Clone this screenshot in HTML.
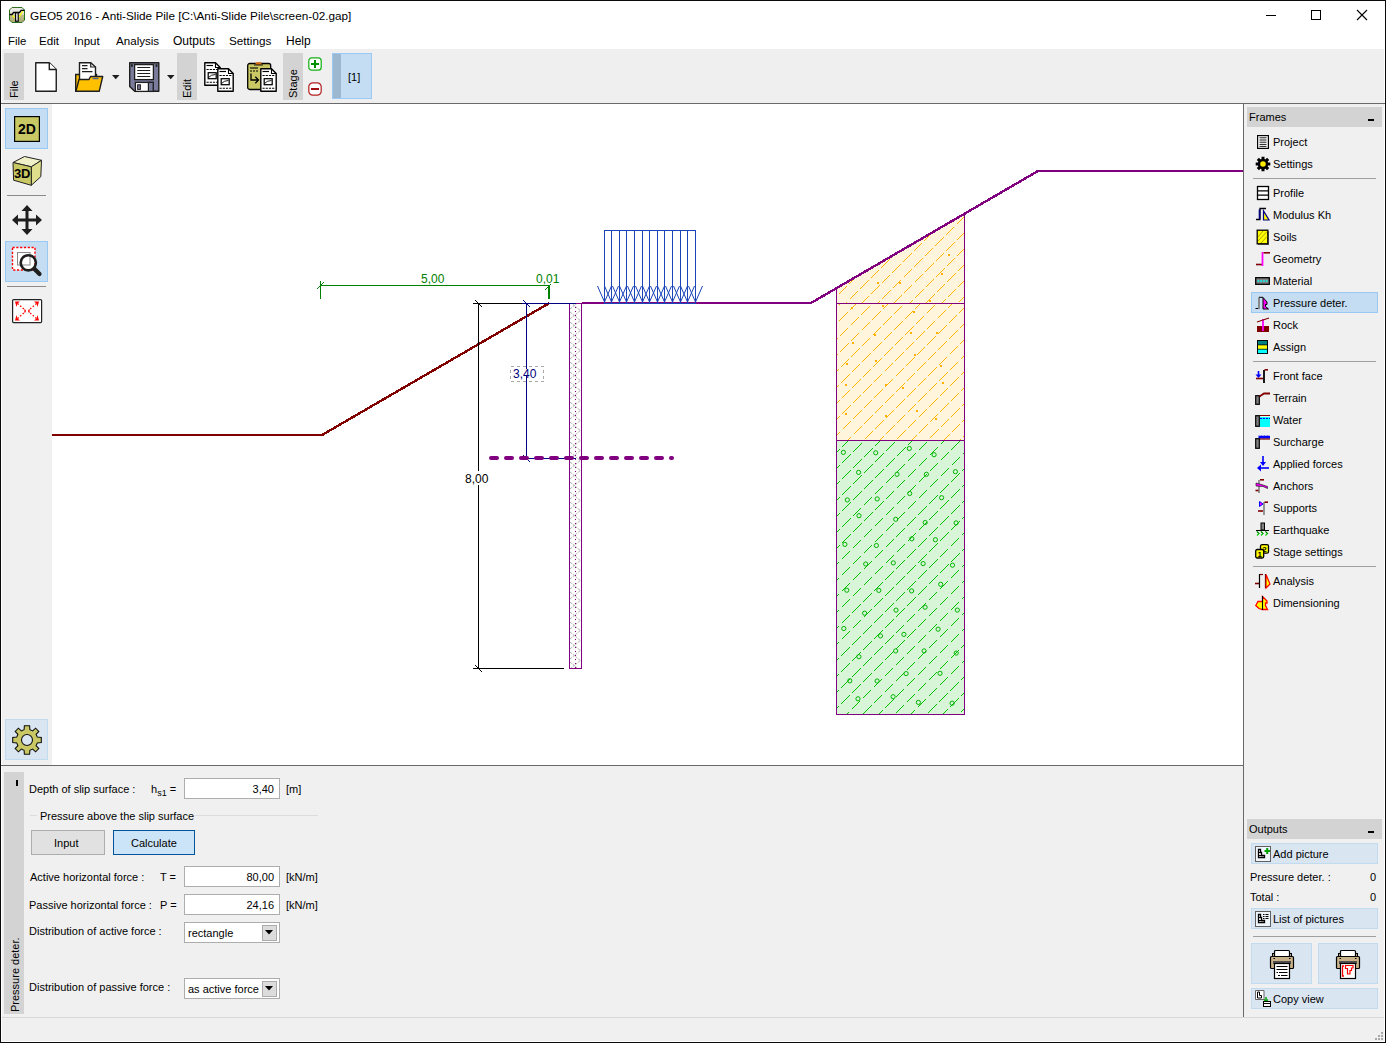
<!DOCTYPE html>
<html><head><meta charset="utf-8">
<style>
*{margin:0;padding:0;box-sizing:border-box}
html,body{width:1386px;height:1043px;overflow:hidden;background:#fff;font-family:"Liberation Sans",sans-serif;font-size:12px;color:#000}
.a{position:absolute}
svg.a{overflow:visible}
.t{position:absolute;white-space:nowrap;font-size:12px;line-height:14px}
.s{position:absolute;white-space:nowrap;font-size:11px;line-height:13px}
.tab{position:absolute;background:#d3d3d3}
.vt{position:absolute;white-space:nowrap;font-size:11px;line-height:13px;transform-origin:0 0;transform:rotate(-90deg)}
.hl{position:absolute;background:#c4ddf2;border:1px solid #98c9f5}
.hl2{position:absolute;background:#d9e5f1;border:1px solid #c1dbf1}
.sep{position:absolute;height:1px;background:#a0a0a0}
.inp{position:absolute;background:#fff;border:1px solid #adadad;height:21px;width:96px}
.inp span{position:absolute;right:5px;top:4px;font-size:11px;line-height:13px}
.ic{position:absolute}
</style></head>
<body>
<!-- window frame -->
<div class="a" style="left:0;top:0;width:1386px;height:1043px;border:1px solid #0a0a0a;background:#fff"></div>
<!-- title bar -->
<svg class="a" style="left:9px;top:7px" width="16" height="16" viewBox="0 0 16 16">
 <defs><linearGradient id="ig" x1="0" y1="0" x2="0" y2="1"><stop offset="0" stop-color="#ececec"/><stop offset="0.45" stop-color="#e0e0d0"/><stop offset="0.5" stop-color="#c0c088"/><stop offset="1" stop-color="#a8a870"/></linearGradient></defs>
 <path d="M3 0.5H13L15.5 3V13L13 15.5H3L0.5 13V3Z" fill="url(#ig)" stroke="#2f7020" stroke-width="1"/>
 <path d="M3.5 8.5L5.5 10.5M9.5 10.5L14 4" stroke="#ffff00" stroke-width="1.2" fill="none"/>
 <path d="M0.5 7.5H3L4.6 5.5H10.5L12.2 3.3H15.5" fill="none" stroke="#000" stroke-width="1.3"/>
 <rect x="6.6" y="5.8" width="2.6" height="8.4" fill="#fff" stroke="#000" stroke-width="1.2"/>
</svg>
<div class="t" style="left:30px;top:9px;font-size:11.75px">GEO5 2016 - Anti-Slide Pile [C:\Anti-Slide Pile\screen-02.gap]</div>
<!-- menu -->
<div class="t" style="left:8px;top:34px;font-size:11.4px">File</div>
<div class="t" style="left:39px;top:34px;font-size:11.6px">Edit</div>
<div class="t" style="left:74px;top:34px;font-size:11.6px">Input</div>
<div class="t" style="left:116px;top:34px;font-size:11.6px">Analysis</div>
<div class="t" style="left:173px;top:34px;font-size:12px">Outputs</div>
<div class="t" style="left:229px;top:34px;font-size:11.7px">Settings</div>
<div class="t" style="left:286px;top:34px;font-size:12px">Help</div>
<!-- window controls -->
<div class="a" style="left:1266px;top:15px;width:10px;height:1px;background:#000"></div>
<div class="a" style="left:1311px;top:10px;width:10px;height:10px;border:1px solid #000"></div>
<svg class="a" style="left:1356px;top:9px" width="12" height="12"><path d="M1 1L11 11M11 1L1 11" stroke="#000" stroke-width="1.1"/></svg>

<!-- toolbar -->
<div class="a" style="left:2px;top:49px;width:1382px;height:54px;background:#efefef"></div>
<div class="a" style="left:1px;top:103px;width:1384px;height:1px;background:#696969"></div>
<div class="tab" style="left:4px;top:53px;width:20px;height:47px"></div>
<div class="vt" style="left:8px;top:98px;color:#000;font-size:11px">File</div>
<div class="tab" style="left:177px;top:53px;width:20px;height:47px"></div>
<div class="vt" style="left:181px;top:98px;font-size:11px">Edit</div>
<div class="tab" style="left:283px;top:53px;width:20px;height:47px"></div>
<div class="vt" style="left:287px;top:98px;font-size:11px">Stage</div>
<!-- new -->
<svg class="a" style="left:35px;top:62px" width="22" height="30" viewBox="0 0 22 30"><path d="M0.75 0.75H14.3L21.25 7.5V29.25H0.75Z" fill="#fff" stroke="#1e1e1e" stroke-width="1.4" stroke-linejoin="round"/><path d="M14.3 0.75V7.5H21.25" fill="#fff" stroke="#1e1e1e" stroke-width="1.4"/></svg>
<!-- open -->
<svg class="a" style="left:75px;top:62px" width="29" height="30" viewBox="0 0 29 30">
 <path d="M0.7 12.5H21.5V29.3H0.7Z" fill="#ffc000" stroke="#1e1e1e" stroke-width="1.4"/>
 <path d="M4.5 0.7H15.7L20.5 5V22H4.5Z" fill="#fff" stroke="#1e1e1e" stroke-width="1.4"/>
 <path d="M15.7 0.7V5H20.5" fill="none" stroke="#1e1e1e" stroke-width="1.2"/>
 <path d="M7 3.6H12.5M7 6.6H12.5M7 9.6H17.5" stroke="#1e1e1e" stroke-width="1.2"/>
 <path d="M0.9 29.3L4 17.5H14L15.5 14.5H27.7L24.2 29.3Z" fill="#ffc000" stroke="#1e1e1e" stroke-width="1.4" stroke-linejoin="round"/>
 <path d="M17.5 16.5H23.5" stroke="#5a6890" stroke-width="1.5"/>
</svg>
<svg class="a" style="left:112px;top:75px" width="8" height="5"><path d="M0 0H7.5L3.75 4.2Z" fill="#1e1e1e"/></svg>
<!-- save -->
<svg class="a" style="left:129px;top:62px" width="31" height="30" viewBox="0 0 31 30">
 <path d="M0.7 0.7H29.8V29.3H5.7L0.7 24.5Z" fill="#7b7b9b" stroke="#1e1e1e" stroke-width="1.4" stroke-linejoin="round"/>
 <rect x="5.6" y="2.6" width="18.8" height="15" fill="#fff" stroke="#1e1e1e" stroke-width="1.3"/>
 <path d="M8.3 5.5H21.2M8.3 8.5H21.2M8.3 11.5H21.2M8.3 14.5H21.2" stroke="#1e1e1e" stroke-width="1.1"/>
 <rect x="6.4" y="20.4" width="17.8" height="9" fill="#fff" stroke="#1e1e1e" stroke-width="1.3"/>
 <rect x="19.4" y="20.4" width="4.8" height="9" fill="#7b7b9b" stroke="#1e1e1e" stroke-width="1.2"/>
 <rect x="8.6" y="22.8" width="2.8" height="4.6" fill="#7b7b9b" stroke="#1e1e1e" stroke-width="1"/>
 <rect x="2" y="2.2" width="1.8" height="2.6" fill="#1e1e1e"/><rect x="26.6" y="2.2" width="1.8" height="2.6" fill="#1e1e1e"/>
</svg>
<svg class="a" style="left:167px;top:75px" width="8" height="5"><path d="M0 0H7.5L3.75 4.2Z" fill="#1e1e1e"/></svg>
<!-- copy -->
<svg class="a" style="left:204px;top:62px" width="31" height="31" viewBox="0 0 31 31">
 <g id="doc"><path d="M0.8 0.8H11.5L16.2 5.5V23.2H0.8Z" fill="#fff" stroke="#000" stroke-width="1.4" stroke-linejoin="round"/><path d="M11.5 0.8V5.5H16.2" fill="none" stroke="#000" stroke-width="1.1"/>
 <path d="M2.5 3.5H9" stroke="#000" stroke-width="1.15"/><path d="M2.5 7.5H14.5M2.5 20.2H14.5" stroke="#000" stroke-width="1.15" stroke-dasharray="2.2 1"/>
 <rect x="4.2" y="10.7" width="8" height="6" fill="#fff" stroke="#000" stroke-width="1.25"/><path d="M4.5 15.5Q7 12.5 11.5 12.5" fill="none" stroke="#000" stroke-width="0.9"/></g>
 <use href="#doc" x="13" y="6"/>
</svg>
<!-- paste -->
<svg class="a" style="left:247px;top:62px" width="31" height="31" viewBox="0 0 31 31">
 <rect x="0.7" y="1.5" width="23" height="26" rx="2" fill="#c9c864" stroke="#000" stroke-width="1.3"/>
 <rect x="8.5" y="0.3" width="6" height="2.6" rx="1.3" fill="#d87010"/><path d="M7 3H16" stroke="#000" stroke-width="0.9"/>
 <path d="M3 6H11" stroke="#000" stroke-width="1.1"/><path d="M3 9H11" stroke="#000" stroke-width="1.1" stroke-dasharray="2 1"/>
 <path d="M4 11.5V18H11.5M8.3 14.8L11.5 18L8.3 21.2" fill="none" stroke="#000" stroke-width="1.3"/>
 <use href="#doc" x="13" y="6"/>
</svg>
<!-- stage +/- -->
<svg class="a" style="left:308px;top:57px" width="14" height="14" viewBox="0 0 14 14"><rect x="0.8" y="0.8" width="12.4" height="12.4" rx="3" fill="#fff" stroke="#10b010" stroke-width="1.2"/><path d="M3 7H11M7 3V11" stroke="#009000" stroke-width="2"/></svg>
<svg class="a" style="left:308px;top:82px" width="14" height="14" viewBox="0 0 14 14"><rect x="0.8" y="0.8" width="12.4" height="12.4" rx="4" fill="#fff" stroke="#b02020" stroke-width="1.2"/><path d="M3 7H11" stroke="#a01010" stroke-width="2"/></svg>
<div class="a" style="left:332px;top:53px;width:40px;height:46px;background:#c4ddf2;border:1px solid #99c9f4"></div>
<div class="a" style="left:333px;top:54px;width:8px;height:44px;background:#9cb8d0"></div>
<div class="t" style="left:348px;top:70px;font-size:11px">[1]</div>

<!-- left toolbar -->
<div class="a" style="left:2px;top:104px;width:50px;height:661px;background:#f0f0f0"></div>
<div class="hl" style="left:5px;top:108px;width:43px;height:41px"></div>
<svg class="a" style="left:14px;top:116px" width="26" height="26" viewBox="0 0 26 26"><rect x="0.6" y="0.6" width="24.8" height="24.8" fill="#c8c864" stroke="#000" stroke-width="1.2"/><text x="13" y="18.2" text-anchor="middle" font-family="Liberation Sans" font-weight="bold" font-size="14" fill="#000">2D</text></svg>
<svg class="a" style="left:12px;top:156px" width="31" height="31" viewBox="0 0 31 31">
 <path d="M1 6.5L12.5 0.5L29.5 4.3L19.3 10.8Z" fill="#efefc8" stroke="#222" stroke-width="1"/>
 <path d="M19.3 10.8L29.5 4.3L28.8 20.7L19.3 29.3Z" fill="#dede8c" stroke="#222" stroke-width="1"/>
 <path d="M1 6.5L19.3 10.8L19.3 29.3L1.6 24.2Z" fill="#c8c864" stroke="#222" stroke-width="1"/>
 <text x="10.2" y="22" text-anchor="middle" font-family="Liberation Sans" font-weight="bold" font-size="13" fill="#000">3D</text>
</svg>
<div class="a" style="left:7px;top:195px;width:39px;height:1px;background:#8a8a8a"></div>
<svg class="a" style="left:12px;top:205px" width="31" height="31" viewBox="0 0 31 31">
 <path d="M15 4V26M4 15H26" stroke="#1e1e1e" stroke-width="3"/>
 <path d="M15 0L20.5 6H9.5Z M15 30L20.5 24H9.5Z M0 15L6 9.5V20.5Z M30 15L24 9.5V20.5Z" fill="#1e1e1e"/>
</svg>
<div class="hl" style="left:5px;top:241px;width:43px;height:41px"></div>
<svg class="a" style="left:11px;top:246px" width="32" height="32" viewBox="0 0 32 32">
 <rect x="1.5" y="1.5" width="22.5" height="22.5" fill="#fff" stroke="#ff0000" stroke-width="1.4" stroke-dasharray="2.2 1.6"/>
 <rect x="6.5" y="6.5" width="12.5" height="12.5" fill="none" stroke="#888" stroke-width="1"/>
 <circle cx="17.3" cy="16.8" r="7.6" fill="none" stroke="#1e1e1e" stroke-width="2.6"/>
 <path d="M23.5 23L28.5 28" stroke="#1e1e1e" stroke-width="4.2" stroke-linecap="round"/>
</svg>
<div class="a" style="left:7px;top:286px;width:39px;height:1px;background:#8a8a8a"></div>
<svg class="a" style="left:12px;top:299px" width="31" height="25" viewBox="0 0 31 25">
 <rect x="0.6" y="0.6" width="29" height="23" rx="1" fill="#fff" stroke="#222" stroke-width="1.2"/>
 <path d="M3 2.5H8L5.5 4.5L4.5 8Z M27 2.5H22L24.5 4.5L25.5 8Z M3 21.5H8L5.5 19.5L4.5 16Z M27 21.5H22L24.5 19.5L25.5 16Z" fill="#ff0000"/>
 <path d="M5.5 4.5L12.5 10.5M24.5 4.5L17.5 10.5M5.5 19.5L12.5 13.5M24.5 19.5L17.5 13.5" stroke="#ff0000" stroke-width="1.2" stroke-dasharray="1.6 1.8"/>
 <path d="M12.5 10.5Q14 12 12.5 13.5M17.5 10.5Q16 12 17.5 13.5" fill="none" stroke="#ff0000" stroke-width="1.2"/>
</svg>
<div class="hl2" style="left:5px;top:719px;width:43px;height:41px"></div>
<svg class="a" style="left:12px;top:725px" width="30" height="30" viewBox="-15 -15 30 30">
 <path id="gear" fill="#c9c864" stroke="#111" stroke-width="1.1" fill-rule="evenodd" d="M-2.6,-14.3 L2.6,-14.3 L2.9,-10.3 L5.7,-9.1 L8.6,-11.8 L11.8,-8.6 L9.1,-5.7 L10.3,-2.9 L14.3,-2.6 L14.3,2.6 L10.3,2.9 L9.1,5.7 L11.8,8.6 L8.6,11.8 L5.7,9.1 L2.9,10.3 L2.6,14.3 L-2.6,14.3 L-2.9,10.3 L-5.7,9.1 L-8.6,11.8 L-11.8,8.6 L-9.1,5.7 L-10.3,2.9 L-14.3,2.6 L-14.3,-2.6 L-10.3,-2.9 L-9.1,-5.7 L-11.8,-8.6 L-8.6,-11.8 L-5.7,-9.1 L-2.9,-10.3 Z M5.5,0 A5.5,5.5 0 1 0 -5.5,0 A5.5,5.5 0 1 0 5.5,0 Z"/>
</svg>
<svg class="a" style="left:52px;top:104px" width="1191" height="661" viewBox="52 104 1191 661" shape-rendering="crispEdges">
<rect x="52" y="104" width="1191" height="661" fill="#fff"/>
<defs>
<clipPath id="c1"><polygon points="837,288.41 964,213.69 964,303 837,303"/></clipPath>
<clipPath id="c2"><rect x="837" y="304" width="127" height="136"/></clipPath>
<clipPath id="c3"><rect x="837" y="441" width="127" height="273"/></clipPath>
<clipPath id="cp"><rect x="570" y="304" width="11" height="364"/></clipPath>
</defs>
<polygon points="836,288.41 964,213.69 964,303 836,303" fill="#fff5dc" shape-rendering="auto"/>
<rect x="836" y="303" width="128" height="137" fill="#fff5dc"/>
<rect x="836" y="440" width="128" height="274" fill="#d8f5d8"/>
<g clip-path="url(#c1)" stroke="#ffb400" stroke-width="1" stroke-dasharray="12 3" fill="none" shape-rendering="crispEdges"><path d="M727.0 310.0L837.0 200.0" stroke-dashoffset="11"/><path d="M743.0 310.0L853.0 200.0" stroke-dashoffset="3"/><path d="M759.0 310.0L869.0 200.0" stroke-dashoffset="10"/><path d="M775.0 310.0L885.0 200.0" stroke-dashoffset="2"/><path d="M791.0 310.0L901.0 200.0" stroke-dashoffset="9"/><path d="M807.0 310.0L917.0 200.0" stroke-dashoffset="1"/><path d="M823.0 310.0L933.0 200.0" stroke-dashoffset="8"/><path d="M839.0 310.0L949.0 200.0" stroke-dashoffset="0"/><path d="M855.0 310.0L965.0 200.0" stroke-dashoffset="7"/><path d="M871.0 310.0L981.0 200.0" stroke-dashoffset="14"/><path d="M887.0 310.0L997.0 200.0" stroke-dashoffset="6"/><path d="M903.0 310.0L1013.0 200.0" stroke-dashoffset="13"/><path d="M919.0 310.0L1029.0 200.0" stroke-dashoffset="5"/><path d="M935.0 310.0L1045.0 200.0" stroke-dashoffset="12"/><path d="M951.0 310.0L1061.0 200.0" stroke-dashoffset="4"/></g>
<g clip-path="url(#c2)" stroke="#ffb400" stroke-width="1" stroke-dasharray="12 3" fill="none" shape-rendering="crispEdges"><path d="M699.0 445.0L844.0 300.0" stroke-dashoffset="12"/><path d="M715.0 445.0L860.0 300.0" stroke-dashoffset="4"/><path d="M731.0 445.0L876.0 300.0" stroke-dashoffset="11"/><path d="M747.0 445.0L892.0 300.0" stroke-dashoffset="3"/><path d="M763.0 445.0L908.0 300.0" stroke-dashoffset="10"/><path d="M779.0 445.0L924.0 300.0" stroke-dashoffset="2"/><path d="M795.0 445.0L940.0 300.0" stroke-dashoffset="9"/><path d="M811.0 445.0L956.0 300.0" stroke-dashoffset="1"/><path d="M827.0 445.0L972.0 300.0" stroke-dashoffset="8"/><path d="M843.0 445.0L988.0 300.0" stroke-dashoffset="0"/><path d="M859.0 445.0L1004.0 300.0" stroke-dashoffset="7"/><path d="M875.0 445.0L1020.0 300.0" stroke-dashoffset="14"/><path d="M891.0 445.0L1036.0 300.0" stroke-dashoffset="6"/><path d="M907.0 445.0L1052.0 300.0" stroke-dashoffset="13"/><path d="M923.0 445.0L1068.0 300.0" stroke-dashoffset="5"/><path d="M939.0 445.0L1084.0 300.0" stroke-dashoffset="12"/><path d="M955.0 445.0L1100.0 300.0" stroke-dashoffset="4"/></g>
<g clip-path="url(#c3)" stroke="#00c000" stroke-width="1" stroke-dasharray="12 3.5" fill="none" shape-rendering="crispEdges"><path d="M553.0 720.0L838.0 435.0" stroke-dashoffset="9"/><path d="M569.0 720.0L854.0 435.0" stroke-dashoffset="1"/><path d="M585.0 720.0L870.0 435.0" stroke-dashoffset="8"/><path d="M601.0 720.0L886.0 435.0" stroke-dashoffset="0"/><path d="M617.0 720.0L902.0 435.0" stroke-dashoffset="7"/><path d="M633.0 720.0L918.0 435.0" stroke-dashoffset="14"/><path d="M649.0 720.0L934.0 435.0" stroke-dashoffset="6"/><path d="M665.0 720.0L950.0 435.0" stroke-dashoffset="13"/><path d="M681.0 720.0L966.0 435.0" stroke-dashoffset="5"/><path d="M697.0 720.0L982.0 435.0" stroke-dashoffset="12"/><path d="M713.0 720.0L998.0 435.0" stroke-dashoffset="4"/><path d="M729.0 720.0L1014.0 435.0" stroke-dashoffset="11"/><path d="M745.0 720.0L1030.0 435.0" stroke-dashoffset="3"/><path d="M761.0 720.0L1046.0 435.0" stroke-dashoffset="10"/><path d="M777.0 720.0L1062.0 435.0" stroke-dashoffset="2"/><path d="M793.0 720.0L1078.0 435.0" stroke-dashoffset="9"/><path d="M809.0 720.0L1094.0 435.0" stroke-dashoffset="1"/><path d="M825.0 720.0L1110.0 435.0" stroke-dashoffset="8"/><path d="M841.0 720.0L1126.0 435.0" stroke-dashoffset="0"/><path d="M857.0 720.0L1142.0 435.0" stroke-dashoffset="7"/><path d="M873.0 720.0L1158.0 435.0" stroke-dashoffset="14"/><path d="M889.0 720.0L1174.0 435.0" stroke-dashoffset="6"/><path d="M905.0 720.0L1190.0 435.0" stroke-dashoffset="13"/><path d="M921.0 720.0L1206.0 435.0" stroke-dashoffset="5"/><path d="M937.0 720.0L1222.0 435.0" stroke-dashoffset="12"/><path d="M953.0 720.0L1238.0 435.0" stroke-dashoffset="4"/></g>
<g fill="none" stroke="#00b400" stroke-width="1" shape-rendering="auto"><circle cx="843.4" cy="452.4" r="2.1"/><circle cx="875.7" cy="452.8" r="2.1"/><circle cx="909.3" cy="448.5" r="2.1"/><circle cx="934.1" cy="454.7" r="2.1"/><circle cx="858.6" cy="472.4" r="2.1"/><circle cx="897.0" cy="474.3" r="2.1"/><circle cx="926.4" cy="474.3" r="2.1"/><circle cx="955.4" cy="471.7" r="2.1"/><circle cx="847.3" cy="499.9" r="2.1"/><circle cx="877.2" cy="498.9" r="2.1"/><circle cx="909.7" cy="493.5" r="2.1"/><circle cx="941.6" cy="497.7" r="2.1"/><circle cx="859.0" cy="515.7" r="2.1"/><circle cx="895.7" cy="519.3" r="2.1"/><circle cx="925.2" cy="522.5" r="2.1"/><circle cx="956.1" cy="522.9" r="2.1"/><circle cx="844.9" cy="544.4" r="2.1"/><circle cx="876.4" cy="545.5" r="2.1"/><circle cx="911.8" cy="538.8" r="2.1"/><circle cx="935.4" cy="539.7" r="2.1"/><circle cx="865.7" cy="564.0" r="2.1"/><circle cx="893.3" cy="562.9" r="2.1"/><circle cx="923.1" cy="563.6" r="2.1"/><circle cx="952.5" cy="565.2" r="2.1"/><circle cx="846.8" cy="590.2" r="2.1"/><circle cx="878.8" cy="590.4" r="2.1"/><circle cx="911.6" cy="590.9" r="2.1"/><circle cx="940.7" cy="584.3" r="2.1"/><circle cx="864.6" cy="613.2" r="2.1"/><circle cx="896.0" cy="610.1" r="2.1"/><circle cx="925.1" cy="607.2" r="2.1"/><circle cx="957.3" cy="610.1" r="2.1"/><circle cx="843.8" cy="628.5" r="2.1"/><circle cx="880.5" cy="635.9" r="2.1"/><circle cx="903.9" cy="634.4" r="2.1"/><circle cx="938.1" cy="629.2" r="2.1"/><circle cx="858.9" cy="656.7" r="2.1"/><circle cx="895.7" cy="650.9" r="2.1"/><circle cx="924.1" cy="650.9" r="2.1"/><circle cx="956.2" cy="653.1" r="2.1"/><circle cx="849.8" cy="680.8" r="2.1"/><circle cx="877.1" cy="681.0" r="2.1"/><circle cx="906.1" cy="673.6" r="2.1"/><circle cx="940.0" cy="673.3" r="2.1"/><circle cx="858.0" cy="698.8" r="2.1"/><circle cx="893.1" cy="696.7" r="2.1"/><circle cx="918.4" cy="702.4" r="2.1"/><circle cx="952.1" cy="703.2" r="2.1"/></g>
<g fill="#ffb000"><rect x="948" y="254" width="2" height="2"/><rect x="877" y="282" width="2" height="2"/><rect x="899" y="282" width="2" height="2"/><rect x="941" y="273" width="2" height="2"/><rect x="851" y="307" width="2" height="2"/><rect x="882" y="305" width="2" height="2"/><rect x="913" y="311" width="2" height="2"/><rect x="929" y="300" width="2" height="2"/><rect x="852" y="342" width="2" height="2"/><rect x="874" y="334" width="2" height="2"/><rect x="910" y="332" width="2" height="2"/><rect x="936" y="332" width="2" height="2"/><rect x="846" y="363" width="2" height="2"/><rect x="875" y="360" width="2" height="2"/><rect x="914" y="354" width="2" height="2"/><rect x="940" y="365" width="2" height="2"/><rect x="845" y="384" width="2" height="2"/><rect x="885" y="384" width="2" height="2"/><rect x="902" y="387" width="2" height="2"/><rect x="942" y="382" width="2" height="2"/><rect x="845" y="413" width="2" height="2"/><rect x="885" y="415" width="2" height="2"/><rect x="916" y="410" width="2" height="2"/><rect x="935" y="418" width="2" height="2"/></g>
<path d="M836.5 288.4V714.5H964.5V213.7" fill="none" stroke="#800080" stroke-width="1"/>
<path d="M836 303.5H964M836 440.5H964" stroke="#800080" stroke-width="1"/>
<rect x="569.5" y="303.5" width="12" height="365" fill="#fff" stroke="#800080" stroke-width="1"/>
<path clip-path="url(#cp)" d="M570 289 L581 280M570 282 L581 291M570 299 L581 290M570 292 L581 301M570 309 L581 300M570 302 L581 311M570 319 L581 310M570 312 L581 321M570 329 L581 320M570 322 L581 331M570 339 L581 330M570 332 L581 341M570 349 L581 340M570 342 L581 351M570 359 L581 350M570 352 L581 361M570 369 L581 360M570 362 L581 371M570 379 L581 370M570 372 L581 381M570 389 L581 380M570 382 L581 391M570 399 L581 390M570 392 L581 401M570 409 L581 400M570 402 L581 411M570 419 L581 410M570 412 L581 421M570 429 L581 420M570 422 L581 431M570 439 L581 430M570 432 L581 441M570 449 L581 440M570 442 L581 451M570 459 L581 450M570 452 L581 461M570 469 L581 460M570 462 L581 471M570 479 L581 470M570 472 L581 481M570 489 L581 480M570 482 L581 491M570 499 L581 490M570 492 L581 501M570 509 L581 500M570 502 L581 511M570 519 L581 510M570 512 L581 521M570 529 L581 520M570 522 L581 531M570 539 L581 530M570 532 L581 541M570 549 L581 540M570 542 L581 551M570 559 L581 550M570 552 L581 561M570 569 L581 560M570 562 L581 571M570 579 L581 570M570 572 L581 581M570 589 L581 580M570 582 L581 591M570 599 L581 590M570 592 L581 601M570 609 L581 600M570 602 L581 611M570 619 L581 610M570 612 L581 621M570 629 L581 620M570 622 L581 631M570 639 L581 630M570 632 L581 641M570 649 L581 640M570 642 L581 651M570 659 L581 650M570 652 L581 661M570 669 L581 660M570 662 L581 671M570 679 L581 670M570 672 L581 681M570 689 L581 680M570 682 L581 691M570 699 L581 690M570 692 L581 701" stroke="#a8a8a8" stroke-width="0.9" stroke-dasharray="2.5 1" fill="none" shape-rendering="auto"/>
<g fill="#800080"><rect x="575" y="307" width="1" height="1"/><rect x="575" y="311" width="1" height="1"/><rect x="575" y="315" width="1" height="1"/><rect x="575" y="319" width="1" height="1"/><rect x="575" y="323" width="1" height="1"/><rect x="575" y="327" width="1" height="1"/><rect x="575" y="331" width="1" height="1"/><rect x="575" y="335" width="1" height="1"/><rect x="575" y="339" width="1" height="1"/><rect x="575" y="343" width="1" height="1"/><rect x="575" y="347" width="1" height="1"/><rect x="575" y="351" width="1" height="1"/><rect x="575" y="355" width="1" height="1"/><rect x="575" y="359" width="1" height="1"/><rect x="575" y="363" width="1" height="1"/><rect x="575" y="367" width="1" height="1"/><rect x="575" y="371" width="1" height="1"/><rect x="575" y="375" width="1" height="1"/><rect x="575" y="379" width="1" height="1"/><rect x="575" y="383" width="1" height="1"/><rect x="575" y="387" width="1" height="1"/><rect x="575" y="391" width="1" height="1"/><rect x="575" y="395" width="1" height="1"/><rect x="575" y="399" width="1" height="1"/><rect x="575" y="403" width="1" height="1"/><rect x="575" y="407" width="1" height="1"/><rect x="575" y="411" width="1" height="1"/><rect x="575" y="415" width="1" height="1"/><rect x="575" y="419" width="1" height="1"/><rect x="575" y="423" width="1" height="1"/><rect x="575" y="427" width="1" height="1"/><rect x="575" y="431" width="1" height="1"/><rect x="575" y="435" width="1" height="1"/><rect x="575" y="439" width="1" height="1"/><rect x="575" y="443" width="1" height="1"/><rect x="575" y="447" width="1" height="1"/><rect x="575" y="451" width="1" height="1"/><rect x="575" y="455" width="1" height="1"/><rect x="575" y="459" width="1" height="1"/><rect x="575" y="463" width="1" height="1"/><rect x="575" y="467" width="1" height="1"/><rect x="575" y="471" width="1" height="1"/><rect x="575" y="475" width="1" height="1"/><rect x="575" y="479" width="1" height="1"/><rect x="575" y="483" width="1" height="1"/><rect x="575" y="487" width="1" height="1"/><rect x="575" y="491" width="1" height="1"/><rect x="575" y="495" width="1" height="1"/><rect x="575" y="499" width="1" height="1"/><rect x="575" y="503" width="1" height="1"/><rect x="575" y="507" width="1" height="1"/><rect x="575" y="511" width="1" height="1"/><rect x="575" y="515" width="1" height="1"/><rect x="575" y="519" width="1" height="1"/><rect x="575" y="523" width="1" height="1"/><rect x="575" y="527" width="1" height="1"/><rect x="575" y="531" width="1" height="1"/><rect x="575" y="535" width="1" height="1"/><rect x="575" y="539" width="1" height="1"/><rect x="575" y="543" width="1" height="1"/><rect x="575" y="547" width="1" height="1"/><rect x="575" y="551" width="1" height="1"/><rect x="575" y="555" width="1" height="1"/><rect x="575" y="559" width="1" height="1"/><rect x="575" y="563" width="1" height="1"/><rect x="575" y="567" width="1" height="1"/><rect x="575" y="571" width="1" height="1"/><rect x="575" y="575" width="1" height="1"/><rect x="575" y="579" width="1" height="1"/><rect x="575" y="583" width="1" height="1"/><rect x="575" y="587" width="1" height="1"/><rect x="575" y="591" width="1" height="1"/><rect x="575" y="595" width="1" height="1"/><rect x="575" y="599" width="1" height="1"/><rect x="575" y="603" width="1" height="1"/><rect x="575" y="607" width="1" height="1"/><rect x="575" y="611" width="1" height="1"/><rect x="575" y="615" width="1" height="1"/><rect x="575" y="619" width="1" height="1"/><rect x="575" y="623" width="1" height="1"/><rect x="575" y="627" width="1" height="1"/><rect x="575" y="631" width="1" height="1"/><rect x="575" y="635" width="1" height="1"/><rect x="575" y="639" width="1" height="1"/><rect x="575" y="643" width="1" height="1"/><rect x="575" y="647" width="1" height="1"/><rect x="575" y="651" width="1" height="1"/><rect x="575" y="655" width="1" height="1"/><rect x="575" y="659" width="1" height="1"/><rect x="575" y="663" width="1" height="1"/><rect x="575" y="667" width="1" height="1"/></g>
<path d="M52 435H322" fill="none" stroke="#800000" stroke-width="2"/>
<path d="M322 435L549.5 303" fill="none" stroke="#800000" stroke-width="2.4"/>
<path d="M582 303H811M1038 171H1243" fill="none" stroke="#800080" stroke-width="2"/>
<path d="M811 303L1038 171" fill="none" stroke="#800080" stroke-width="2.4"/>
<path d="M576 303.5H582" stroke="#800080" stroke-width="1"/>
<path d="M473 303.5H522M478.5 303V668M473 668.5H564" stroke="#000" stroke-width="1"/>
<path d="M475 300L482 307M475 665L482 672" stroke="#000" stroke-width="1" shape-rendering="auto"/>
<path d="M522 303.5H576M526.5 303V458M526 458.5H576" stroke="#000080" stroke-width="1"/>
<path d="M523 300L530 307M523 455L530 462" stroke="#000080" stroke-width="1" shape-rendering="auto"/>
<rect x="510.5" y="366.5" width="33" height="15" fill="#fff" stroke="#a8a8a8" stroke-width="1" stroke-dasharray="3 3"/>
<path d="M526.5 303V369M526.5 376V458" stroke="#000080" stroke-width="1"/>
<path d="M491 458H672" stroke="#800080" stroke-width="4" stroke-dasharray="6 9" stroke-linecap="round" shape-rendering="auto"/>
<path d="M320 285.5H549M320.5 281V299" stroke="#008000" stroke-width="1"/>
<path d="M548 285H550V299H548Z" fill="#008000"/>
<path d="M317 289L324 282M545 290L551 284" stroke="#008000" stroke-width="1" shape-rendering="auto"/>
<path d="M604 230.5H696M604 303.5H696M604.5 230V303M611.5 230V303M619.5 230V303M626.5 230V303M634.5 230V303M642.5 230V303M649.5 230V303M657.5 230V303M664.5 230V303M672.5 230V303M680.5 230V303M687.5 230V303M695.5 230V303" stroke="#1a44b8" stroke-width="1"/>
<path d="M597.5 286L604.5 302M611.5 286L604.5 302M604.5 286L611.5 302M618.5 286L611.5 302M612.5 286L619.5 302M626.5 286L619.5 302M619.5 286L626.5 302M633.5 286L626.5 302M627.5 286L634.5 302M641.5 286L634.5 302M635.5 286L642.5 302M649.5 286L642.5 302M642.5 286L649.5 302M656.5 286L649.5 302M650.5 286L657.5 302M664.5 286L657.5 302M657.5 286L664.5 302M671.5 286L664.5 302M665.5 286L672.5 302M679.5 286L672.5 302M673.5 286L680.5 302M687.5 286L680.5 302M680.5 286L687.5 302M694.5 286L687.5 302M688.5 286L695.5 302M702.5 286L695.5 302" stroke="#1a44b8" stroke-width="1" shape-rendering="auto"/>
<g font-family="Liberation Sans" font-size="12" shape-rendering="auto">
<text x="421" y="283" fill="#008000">5,00</text>
<text x="536" y="283" fill="#008000">0,01</text>
<text x="513" y="378" fill="#000080">3,40</text>
<rect x="464" y="471" width="27" height="14" fill="#fff"/>
<text x="465" y="483" fill="#000">8,00</text>
</g>
</svg>
<div class="a" style="left:1243px;top:104px;width:1px;height:913px;background:#696969"></div>
<div class="a" style="left:1244px;top:104px;width:140px;height:913px;background:#f0f0f0"></div>
<div class="a" style="left:1247px;top:107px;width:135px;height:20px;background:#d3d3d3"></div>
<div class="s" style="left:1249px;top:111px">Frames</div>
<div class="a" style="left:1368px;top:119px;width:6px;height:2px;background:#000"></div>
<div class="hl" style="left:1251px;top:292px;width:127px;height:21px"></div>
<svg class="a" style="left:1255px;top:134px" width="16" height="16" viewBox="0 0 16 16"><rect x="2.6" y="1.6" width="10.8" height="12.8" fill="#fff" stroke="#000" stroke-width="1.2"/><path d="M4.5 3.8H11.5M4.5 6H11.5M4.5 8.2H11.5M4.5 10.4H11.5M4.5 12.4H11.5" stroke="#000" stroke-width="0.9"/></svg>
<div class="s" style="left:1273px;top:136px">Project</div>
<svg class="a" style="left:1255px;top:156px" width="16" height="16" viewBox="0 0 16 16"><g transform="translate(8,8)"><circle r="5.2" fill="#000"/><path fill="#000" d="M-1.5-7.3H1.5V7.3H-1.5ZM-7.3-1.5V1.5H7.3V-1.5Z"/><path fill="#000" transform="rotate(45)" d="M-1.5-7.3H1.5V7.3H-1.5ZM-7.3-1.5V1.5H7.3V-1.5Z"/><circle r="2.8" fill="#ffea00"/></g></svg>
<div class="s" style="left:1273px;top:158px">Settings</div>
<svg class="a" style="left:1255px;top:185px" width="16" height="16" viewBox="0 0 16 16"><rect x="2.5" y="1.5" width="11" height="13" fill="#fff" stroke="#000" stroke-width="1.3"/><path d="M2.5 5.8H13.5M2.5 10.2H13.5" stroke="#000" stroke-width="1.2"/></svg>
<div class="s" style="left:1273px;top:187px">Profile</div>
<svg class="a" style="left:1255px;top:207px" width="16" height="16" viewBox="0 0 16 16"><path d="M1 12.5H5V1.5H11" fill="none" stroke="#000" stroke-width="1.3"/><path d="M4.5 12V2.5" stroke="#000080" stroke-width="1.6"/><path d="M8.5 4V13H14Z" fill="#ffff00" stroke="#000080" stroke-width="1.2"/></svg>
<div class="s" style="left:1273px;top:209px">Modulus Kh</div>
<svg class="a" style="left:1255px;top:229px" width="16" height="16" viewBox="0 0 16 16"><rect x="3" y="2" width="11" height="14" fill="#666"/><rect x="2.2" y="1.2" width="10.6" height="13.6" fill="#ffff00" stroke="#000" stroke-width="1.3"/><path d="M3 8L8 2M3 12L12 2.5M6 14L12 7.5" stroke="#b0a000" stroke-width="1"/></svg>
<div class="s" style="left:1273px;top:231px">Soils</div>
<svg class="a" style="left:1255px;top:251px" width="16" height="16" viewBox="0 0 16 16"><path d="M1 13.5H7.5" stroke="#800000" stroke-width="1.6"/><path d="M7.5 1V15" stroke="#ff00ff" stroke-width="1.8"/><path d="M8.5 1.8H15" stroke="#800000" stroke-width="1.6"/></svg>
<div class="s" style="left:1273px;top:253px">Geometry</div>
<svg class="a" style="left:1255px;top:273px" width="16" height="16" viewBox="0 0 16 16"><rect x="0.7" y="4.7" width="13.6" height="6.6" fill="#808080" stroke="#000" stroke-width="1.3"/><path d="M2.5 8H12.5" stroke="#00ffff" stroke-width="1.6" stroke-dasharray="1.8 1"/></svg>
<div class="s" style="left:1273px;top:275px">Material</div>
<svg class="a" style="left:1255px;top:295px" width="16" height="16" viewBox="0 0 16 16"><path d="M0.5 13.5H3.5" stroke="#000" stroke-width="1"/><path d="M4 2.5V14" stroke="#808080" stroke-width="1.8"/><path d="M4 2.3H8" stroke="#000" stroke-width="1"/><path d="M8 2.5L12 7V9.5H10.5V11.5L13.5 14H8Z" fill="#ff00ff" stroke="#000" stroke-width="1"/></svg>
<div class="s" style="left:1273px;top:297px">Pressure deter.</div>
<svg class="a" style="left:1255px;top:317px" width="16" height="16" viewBox="0 0 16 16"><rect x="2" y="9" width="12" height="6" fill="#800000"/><path d="M8 2V14" stroke="#ff00ff" stroke-width="1.8"/><path d="M2 5L14 1" stroke="#800000" stroke-width="1.2"/></svg>
<div class="s" style="left:1273px;top:319px">Rock</div>
<svg class="a" style="left:1255px;top:339px" width="16" height="16" viewBox="0 0 16 16"><rect x="2" y="1" width="11" height="14" fill="#000"/><rect x="3" y="2" width="9" height="3.5" fill="#008080"/><rect x="3" y="6.3" width="9" height="3.5" fill="#ffff00"/><rect x="3" y="10.6" width="9" height="3.5" fill="#00ffff"/></svg>
<div class="s" style="left:1273px;top:341px">Assign</div>
<svg class="a" style="left:1255px;top:368px" width="16" height="16" viewBox="0 0 16 16"><path d="M3.5 3V8" stroke="#0000ff" stroke-width="1.6"/><path d="M0.5 6.5H6.5L3.5 10Z" fill="#0000ff"/><path d="M1 10.5H8" stroke="#800000" stroke-width="1.6"/><path d="M9 2V15" stroke="#000" stroke-width="1.8"/><path d="M9.5 1.8H13" stroke="#800000" stroke-width="1.6"/></svg>
<div class="s" style="left:1273px;top:370px">Front face</div>
<svg class="a" style="left:1255px;top:390px" width="16" height="16" viewBox="0 0 16 16"><rect x="0.7" y="5.7" width="3.6" height="8.6" fill="#808080" stroke="#000" stroke-width="1.2"/><path d="M4.5 6.5L9 3.5H15" fill="none" stroke="#800000" stroke-width="1.8"/></svg>
<div class="s" style="left:1273px;top:392px">Terrain</div>
<svg class="a" style="left:1255px;top:412px" width="16" height="16" viewBox="0 0 16 16"><rect x="4.5" y="5" width="10.5" height="10" fill="#00ffff"/><path d="M5 6.5H15" stroke="#0000ff" stroke-width="1.2" stroke-dasharray="2 1"/><path d="M4.5 3.5H15" stroke="#800000" stroke-width="1"/><rect x="0.7" y="3.7" width="3.6" height="10.6" fill="#808080" stroke="#000" stroke-width="1.2"/></svg>
<div class="s" style="left:1273px;top:414px">Water</div>
<svg class="a" style="left:1255px;top:434px" width="16" height="16" viewBox="0 0 16 16"><path d="M3.5 1.5H15V4.5H3.5Z" fill="#0000ff"/><path d="M5 0.5V2M8 0.5V2M11 0.5V2M14 0.5V2" stroke="#f0f0f0" stroke-width="1"/><path d="M4 5H15" stroke="#800000" stroke-width="1.2"/><rect x="0.7" y="4.7" width="3.6" height="9.6" fill="#808080" stroke="#000" stroke-width="1.2"/></svg>
<div class="s" style="left:1273px;top:436px">Surcharge</div>
<svg class="a" style="left:1255px;top:456px" width="16" height="16" viewBox="0 0 16 16"><path d="M8 0V8" stroke="#0000ff" stroke-width="1.6"/><path d="M5 6H11L8 10Z" fill="#0000ff"/><path d="M5 12H14" stroke="#0000ff" stroke-width="1.6"/><path d="M2 12L6 8.5V15.5Z" fill="#0000ff"/></svg>
<div class="s" style="left:1273px;top:458px">Applied forces</div>
<svg class="a" style="left:1255px;top:478px" width="16" height="16" viewBox="0 0 16 16"><path d="M4 2V15" stroke="#808080" stroke-width="1.6"/><path d="M5 1.8H9" stroke="#800000" stroke-width="1.6"/><path d="M0.5 12.5H3.5" stroke="#800000" stroke-width="1.6"/><path d="M1 5L1 8L8 8.5L12.5 10.5V8.5L8 7L1 5Z" fill="#ff00ff" stroke="#000" stroke-width="0.6"/></svg>
<div class="s" style="left:1273px;top:480px">Anchors</div>
<svg class="a" style="left:1255px;top:500px" width="16" height="16" viewBox="0 0 16 16"><path d="M4.5 1.5V6.5L8 4Z" fill="#ff00ff" stroke="#0000ff" stroke-width="1"/><path d="M9 2V15" stroke="#808080" stroke-width="1.6"/><path d="M9.5 2.2H13" stroke="#800000" stroke-width="1.6"/><path d="M3 11H8" stroke="#800000" stroke-width="1.6"/></svg>
<div class="s" style="left:1273px;top:502px">Supports</div>
<svg class="a" style="left:1255px;top:522px" width="16" height="16" viewBox="0 0 16 16"><rect x="6" y="1" width="3.5" height="7" fill="#808080" stroke="#000" stroke-width="1"/><path d="M1 8.5H14" stroke="#000" stroke-width="1"/><path d="M2 9.5L4 11.5L2 13.5M6 9.5L8 11.5L6 13.5M10.5 9.5L12.5 11.5L10.5 13.5" fill="none" stroke="#00d000" stroke-width="1.2"/><path d="M2 9.5L4 11.5M6 9.5L8 11.5M10.5 9.5L12.5 11.5" stroke="#000" stroke-width="0.6"/></svg>
<div class="s" style="left:1273px;top:524px">Earthquake</div>
<svg class="a" style="left:1255px;top:544px" width="16" height="16" viewBox="0 0 16 16"><rect x="5.5" y="0.7" width="8" height="8.5" rx="1.5" fill="#ffff00" stroke="#000" stroke-width="1.3"/><text x="9.5" y="7.5" text-anchor="middle" font-family="Liberation Sans" font-size="8" font-weight="bold">2</text><rect x="0.7" y="5.5" width="8" height="8.5" rx="1.5" fill="#ffff00" stroke="#000" stroke-width="1.3"/><text x="4.7" y="12.5" text-anchor="middle" font-family="Liberation Sans" font-size="8" font-weight="bold">1</text></svg>
<div class="s" style="left:1273px;top:546px">Stage settings</div>
<svg class="a" style="left:1255px;top:573px" width="16" height="16" viewBox="0 0 16 16"><path d="M0 10.5H4" stroke="#800000" stroke-width="1.6"/><path d="M4.5 1V15M10.5 1V15" stroke="#000" stroke-width="1.2"/><path d="M5 1.5H8" stroke="#800000" stroke-width="1.2"/><path d="M11 1.5L15 11L11 15Z" fill="#ffff00" stroke="#ff0000" stroke-width="1.2"/></svg>
<div class="s" style="left:1273px;top:575px">Analysis</div>
<svg class="a" style="left:1255px;top:595px" width="16" height="16" viewBox="0 0 16 16"><path d="M7.5 1.5L12 6V8H10.5V10.5L12.5 14.5H7.5L4 13.5L0.8 10.5L3 6.5H7.5Z" fill="#ffff00" stroke="#ff0000" stroke-width="1.3"/><path d="M7.5 1V15" stroke="#000" stroke-width="1.1"/></svg>
<div class="s" style="left:1273px;top:597px">Dimensioning</div>
<div class="sep" style="left:1253px;top:178px;width:123px"></div>
<div class="sep" style="left:1253px;top:361px;width:123px"></div>
<div class="sep" style="left:1253px;top:566px;width:123px"></div>
<div class="a" style="left:1247px;top:819px;width:135px;height:20px;background:#d3d3d3"></div>
<div class="s" style="left:1249px;top:823px">Outputs</div>
<div class="a" style="left:1368px;top:831px;width:6px;height:2px;background:#000"></div>
<div class="hl2" style="left:1251px;top:843px;width:127px;height:21px"></div>
<svg class="a" style="left:1255px;top:846px" width="17" height="17" viewBox="0 0 17 17"><rect x="0.5" y="0.5" width="15" height="15" fill="#eef5fb" stroke="#606060" stroke-width="1"/><path d="M3.5 3.5H5.5V6.5H6.5V9.5H9.5V11.5H3.5Z" fill="#fff" stroke="#000" stroke-width="1.3"/><path d="M3.5 6.5H5.5M3.5 9.5H6.5" stroke="#000" stroke-width="1"/><path d="M9.5 5H15M12.2 2V8" stroke="#00a000" stroke-width="2"/></svg>
<div class="s" style="left:1273px;top:848px">Add picture</div>
<div class="s" style="left:1250px;top:871px">Pressure deter. :</div>
<div class="s" style="left:1370px;top:871px">0</div>
<div class="s" style="left:1250px;top:891px">Total :</div>
<div class="s" style="left:1370px;top:891px">0</div>
<div class="hl2" style="left:1251px;top:908px;width:127px;height:21px"></div>
<svg class="a" style="left:1255px;top:911px" width="17" height="17" viewBox="0 0 17 17"><rect x="0.5" y="0.5" width="15" height="15" fill="#eef5fb" stroke="#606060" stroke-width="1"/><path d="M3.5 3.5H5.5V6.5H6.5V9.5H9.5V11.5H3.5Z" fill="#fff" stroke="#000" stroke-width="1.3"/><path d="M3.5 6.5H5.5M3.5 9.5H6.5" stroke="#000" stroke-width="1"/><path d="M8 3.5H9.5M10.5 3.5H13.5M8 5.5H9.5M10.5 5.5H13.5M8 7.5H9.5M10.5 7.5H13.5" stroke="#000" stroke-width="1"/></svg>
<div class="s" style="left:1273px;top:913px">List of pictures</div>
<div class="sep" style="left:1253px;top:936px;width:123px"></div>
<div class="hl2" style="left:1251px;top:943px;width:61px;height:41px"></div>
<div class="hl2" style="left:1318px;top:943px;width:60px;height:41px"></div>
<svg class="a" style="left:1267px;top:949px" width="30" height="30" viewBox="0 0 30 30"><rect x="5.5" y="4.5" width="19" height="4" fill="#c8b088" stroke="#000" stroke-width="1"/><rect x="7.5" y="1.5" width="15" height="6" rx="1" fill="#fff" stroke="#000" stroke-width="1.2"/><rect x="3.5" y="7.5" width="23" height="12" rx="1" fill="#c8b088" stroke="#000" stroke-width="1.2"/><rect x="6" y="12" width="18" height="3" fill="#505050"/><rect x="6.5" y="9" width="1.5" height="1" fill="#000"/><rect x="22" y="9" width="1.5" height="1" fill="#000"/><rect x="7.5" y="14.5" width="15" height="15" fill="#fff" stroke="#000" stroke-width="1.2"/><path d="M9.5 17.5H20.5M9.5 20.5H20.5M12 23.5H20.5M14 26.5H20.5" stroke="#000" stroke-width="1.1"/><path d="M9.5 23.5H11M11 26.5H13" stroke="#000" stroke-width="1.1"/></svg>
<svg class="a" style="left:1333px;top:949px" width="30" height="30" viewBox="0 0 30 30"><rect x="5.5" y="4.5" width="19" height="4" fill="#c8b088" stroke="#000" stroke-width="1"/><rect x="7.5" y="1.5" width="15" height="6" rx="1" fill="#fff" stroke="#000" stroke-width="1.2"/><rect x="3.5" y="7.5" width="23" height="12" rx="1" fill="#c8b088" stroke="#000" stroke-width="1.2"/><rect x="6" y="12" width="18" height="3" fill="#505050"/><rect x="6.5" y="9" width="1.5" height="1" fill="#000"/><rect x="22" y="9" width="1.5" height="1" fill="#000"/><rect x="7.5" y="14.5" width="15" height="15" fill="#fff" stroke="#000" stroke-width="1.2"/><path d="M11 17H9.5V27H11" fill="none" stroke="#ff0000" stroke-width="1.3"/><path d="M12.5 16.5H20V19H18.5V21.5H17V25H14.5V19.5H12.5Z" fill="none" stroke="#ff0000" stroke-width="1.2"/></svg>
<div class="hl2" style="left:1251px;top:988px;width:127px;height:21px"></div>
<svg class="a" style="left:1255px;top:990px" width="17" height="17" viewBox="0 0 17 17"><path d="M0.5 0.5H9V9.5H0.5Z" fill="#fff" stroke="#666" stroke-width="1"/><path d="M2.5 2V8H6.5V5.5H4.5V2Z" fill="none" stroke="#000" stroke-width="1"/><path d="M11 7V11.5M9 9.5L11 11.5L13 9.5" fill="none" stroke="#00a000" stroke-width="1.4"/><rect x="8.5" y="11.5" width="7" height="5" fill="#fff" stroke="#000" stroke-width="1"/><path d="M9 13.5H15" stroke="#000" stroke-width="1"/></svg>
<div class="s" style="left:1273px;top:993px">Copy view</div>
<div class="a" style="left:1px;top:765px;width:1242px;height:1px;background:#696969"></div>
<div class="a" style="left:2px;top:766px;width:1241px;height:251px;background:#f0f0f0"></div>
<div class="tab" style="left:4px;top:772px;width:20px;height:242px"></div>
<div class="a" style="left:16px;top:780px;width:2px;height:6px;background:#000"></div>
<div class="vt" style="left:9px;top:1012px">Pressure deter.</div>
<div class="s" style="left:29px;top:783px">Depth of slip surface :</div>
<div class="s" style="left:151px;top:783px">h<span style="font-size:9px;position:relative;top:3px">s1</span> =</div>
<div class="inp" style="left:184px;top:778px"><span>3,40</span></div>
<div class="s" style="left:286px;top:783px">[m]</div>
<div class="a" style="left:30px;top:815px;width:7px;height:1px;background:#dcdcdc"></div>
<div class="s" style="left:40px;top:810px">Pressure above the slip surface</div>
<div class="a" style="left:195px;top:815px;width:123px;height:1px;background:#dcdcdc"></div>
<div class="a" style="left:31px;top:830px;width:74px;height:25px;background:#e1e1e1;border:1px solid #adadad"></div>
<div class="s" style="left:54px;top:837px">Input</div>
<div class="a" style="left:113px;top:830px;width:82px;height:25px;background:#cce4f7;border:1px solid #005499"></div>
<div class="s" style="left:131px;top:837px">Calculate</div>
<div class="s" style="left:30px;top:871px">Active horizontal force :</div>
<div class="s" style="left:160px;top:871px">T =</div>
<div class="inp" style="left:184px;top:866px"><span>80,00</span></div>
<div class="s" style="left:286px;top:871px">[kN/m]</div>
<div class="s" style="left:29px;top:899px">Passive horizontal force :</div>
<div class="s" style="left:160px;top:899px">P =</div>
<div class="inp" style="left:184px;top:894px"><span>24,16</span></div>
<div class="s" style="left:286px;top:899px">[kN/m]</div>
<div class="s" style="left:29px;top:925px">Distribution of active force :</div>
<div class="inp" style="left:184px;top:922px"><span style="left:3px;right:auto;top:4px">rectangle</span></div>
<div class="a" style="left:262px;top:925px;width:15px;height:16px;background:#dcdcdc;border:1px solid #acacac"></div>
<svg class="a" style="left:265px;top:930px" width="9" height="5"><path d="M0 0H8L4 4.5Z" fill="#000"/></svg>
<div class="s" style="left:29px;top:981px">Distribution of passive force :</div>
<div class="inp" style="left:184px;top:978px"><span style="left:3px;right:auto;top:4px">as active force</span></div>
<div class="a" style="left:262px;top:981px;width:15px;height:16px;background:#dcdcdc;border:1px solid #acacac"></div>
<svg class="a" style="left:265px;top:986px" width="9" height="5"><path d="M0 0H8L4 4.5Z" fill="#000"/></svg>
<!-- status bar -->
<div class="a" style="left:2px;top:1017px;width:1382px;height:1px;background:#d7d7d7"></div>
<div class="a" style="left:2px;top:1018px;width:1382px;height:23px;background:#f0f0f0"></div>
<div class="a" style="left:1381px;top:1032px;width:2px;height:2px;background:#a8a8a8"></div>
<div class="a" style="left:1378px;top:1035px;width:2px;height:2px;background:#a8a8a8"></div>
<div class="a" style="left:1381px;top:1035px;width:2px;height:2px;background:#a8a8a8"></div>
<div class="a" style="left:1375px;top:1038px;width:2px;height:2px;background:#a8a8a8"></div>
<div class="a" style="left:1378px;top:1038px;width:2px;height:2px;background:#a8a8a8"></div>
<div class="a" style="left:1381px;top:1038px;width:2px;height:2px;background:#a8a8a8"></div>
</body></html>
